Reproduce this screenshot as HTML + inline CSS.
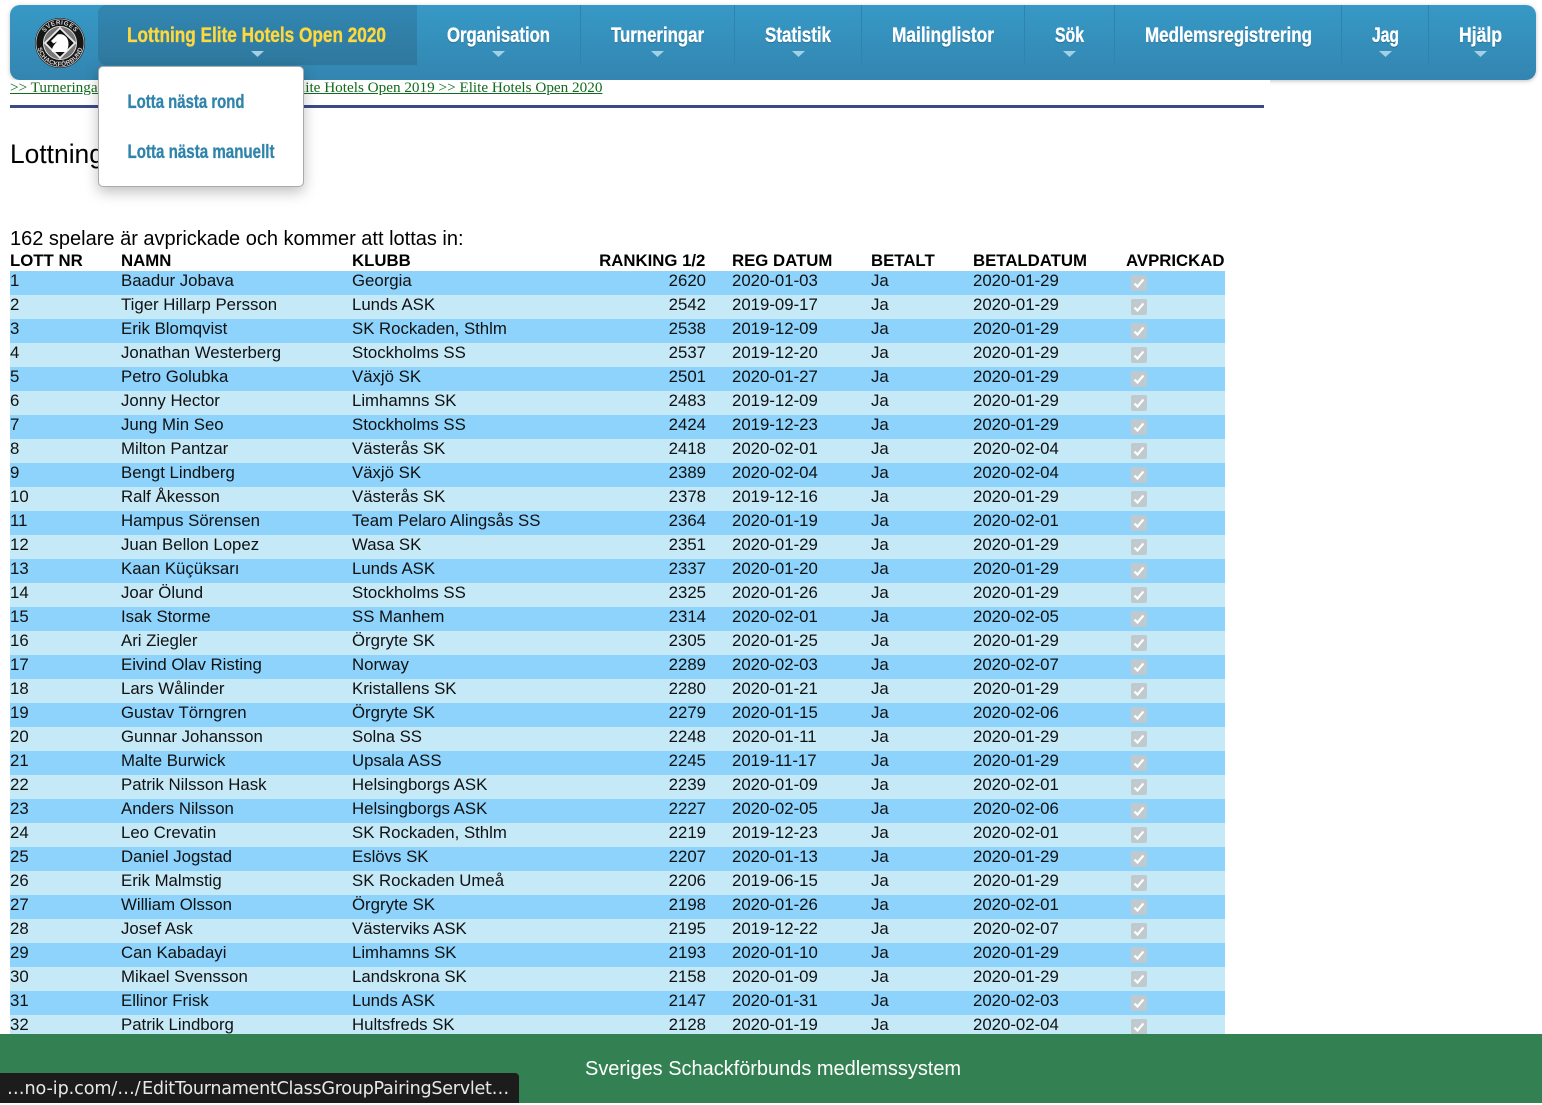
<!DOCTYPE html>
<html lang="sv"><head><meta charset="utf-8"><title>Lottning</title>
<style>
html,body{margin:0;padding:0;background:#fff;width:1542px;height:1103px;overflow:hidden;font-family:"Liberation Sans",sans-serif;color:#000}
.a{position:absolute}
#nav{left:10px;top:5px;width:1526px;height:75px;border-radius:10px;background:linear-gradient(#3799c6,#3385b0);box-shadow:0 1px 4px rgba(0,0,0,.25)}
#sheet{left:0;top:80px;width:1270px;height:30px;background:#fff}
#act{left:98px;top:5px;width:319px;height:60px;border-radius:8px 0 0 8px;background:linear-gradient(#3187b2,#2f789e)}
.sep{top:5px;width:1px;height:60px;background:#2f84ae}
#svg{left:0;top:0}
.crumb{top:79px;font:15.2px/17px "Liberation Serif",serif;color:#116b1c;text-decoration:underline;white-space:nowrap}
#hr{left:10px;top:105px;width:1254px;height:3px;background:#3b4a85}
#h{left:10px;top:139px;font-size:26.4px;line-height:31px}
#drop{left:98px;top:66px;width:204px;height:119px;background:#fff;border:1px solid #aaa;border-radius:5px;box-shadow:0 5px 14px rgba(0,0,0,.25)}
#intro{left:10px;top:228px;font-size:20px;line-height:22px;white-space:nowrap}
table{position:absolute;left:10px;top:251px;width:1215px;border-collapse:collapse;table-layout:fixed;font-size:16.8px;color:#111}
th{font-weight:bold;text-align:left;padding:0;height:20px;line-height:19px;color:#000;white-space:nowrap;vertical-align:top}
th.r{position:relative;left:-.6px}
td{padding:0;height:24px;line-height:19px;vertical-align:top;white-space:nowrap;overflow:hidden}
tr.o td{background:#8dd3fb}
tr.e td{background:#c6e9f7}
.r{text-align:right}
.cb{display:block;margin:4px 0 0 5px;width:16px;height:16px;background:#c0c9ce;border-radius:2px;position:relative}
.cb svg{position:absolute;left:0;top:0}
#foot{left:0;top:1034px;width:1542px;height:69px;background:#338153;color:#fff;font-size:20px;line-height:71px}
#foot span{position:absolute;left:585px;top:0;white-space:nowrap;letter-spacing:-.02px}
#status{left:0;top:1073px;width:519px;height:30px;background:#1c1c1c;border-radius:0 4px 0 0;color:#e8e8e8;font:17.6px/33px "DejaVu Sans",sans-serif;white-space:nowrap;overflow:hidden}
#status span{position:absolute;top:0}
</style></head><body>
<div class="a" id="intro">162 spelare är avprickade och kommer att lottas in:</div>
<table>
<colgroup><col style="width:111px"><col style="width:231px"><col style="width:230px"><col style="width:124px"><col style="width:26px"><col style="width:139px"><col style="width:102px"><col style="width:153px"><col style="width:99px"></colgroup>
<tr><th>LOTT NR</th><th>NAMN</th><th>KLUBB</th><th class="r">RANKING 1/2</th><th></th><th>REG DATUM</th><th>BETALT</th><th>BETALDATUM</th><th>AVPRICKAD</th></tr>
<tr class="o"><td>1</td><td>Baadur Jobava</td><td>Georgia</td><td class="r">2620</td><td></td><td>2020-01-03</td><td>Ja</td><td>2020-01-29</td><td><span class="cb"><svg width="16" height="16"><path d="M3.5 8.5l3 3 6-7" fill="none" stroke="#fff" stroke-width="2.2"/></svg></span></td></tr>
<tr class="e"><td>2</td><td>Tiger Hillarp Persson</td><td>Lunds ASK</td><td class="r">2542</td><td></td><td>2019-09-17</td><td>Ja</td><td>2020-01-29</td><td><span class="cb"><svg width="16" height="16"><path d="M3.5 8.5l3 3 6-7" fill="none" stroke="#fff" stroke-width="2.2"/></svg></span></td></tr>
<tr class="o"><td>3</td><td>Erik Blomqvist</td><td>SK Rockaden, Sthlm</td><td class="r">2538</td><td></td><td>2019-12-09</td><td>Ja</td><td>2020-01-29</td><td><span class="cb"><svg width="16" height="16"><path d="M3.5 8.5l3 3 6-7" fill="none" stroke="#fff" stroke-width="2.2"/></svg></span></td></tr>
<tr class="e"><td>4</td><td>Jonathan Westerberg</td><td>Stockholms SS</td><td class="r">2537</td><td></td><td>2019-12-20</td><td>Ja</td><td>2020-01-29</td><td><span class="cb"><svg width="16" height="16"><path d="M3.5 8.5l3 3 6-7" fill="none" stroke="#fff" stroke-width="2.2"/></svg></span></td></tr>
<tr class="o"><td>5</td><td>Petro Golubka</td><td>Växjö SK</td><td class="r">2501</td><td></td><td>2020-01-27</td><td>Ja</td><td>2020-01-29</td><td><span class="cb"><svg width="16" height="16"><path d="M3.5 8.5l3 3 6-7" fill="none" stroke="#fff" stroke-width="2.2"/></svg></span></td></tr>
<tr class="e"><td>6</td><td>Jonny Hector</td><td>Limhamns SK</td><td class="r">2483</td><td></td><td>2019-12-09</td><td>Ja</td><td>2020-01-29</td><td><span class="cb"><svg width="16" height="16"><path d="M3.5 8.5l3 3 6-7" fill="none" stroke="#fff" stroke-width="2.2"/></svg></span></td></tr>
<tr class="o"><td>7</td><td>Jung Min Seo</td><td>Stockholms SS</td><td class="r">2424</td><td></td><td>2019-12-23</td><td>Ja</td><td>2020-01-29</td><td><span class="cb"><svg width="16" height="16"><path d="M3.5 8.5l3 3 6-7" fill="none" stroke="#fff" stroke-width="2.2"/></svg></span></td></tr>
<tr class="e"><td>8</td><td>Milton Pantzar</td><td>Västerås SK</td><td class="r">2418</td><td></td><td>2020-02-01</td><td>Ja</td><td>2020-02-04</td><td><span class="cb"><svg width="16" height="16"><path d="M3.5 8.5l3 3 6-7" fill="none" stroke="#fff" stroke-width="2.2"/></svg></span></td></tr>
<tr class="o"><td>9</td><td>Bengt Lindberg</td><td>Växjö SK</td><td class="r">2389</td><td></td><td>2020-02-04</td><td>Ja</td><td>2020-02-04</td><td><span class="cb"><svg width="16" height="16"><path d="M3.5 8.5l3 3 6-7" fill="none" stroke="#fff" stroke-width="2.2"/></svg></span></td></tr>
<tr class="e"><td>10</td><td>Ralf Åkesson</td><td>Västerås SK</td><td class="r">2378</td><td></td><td>2019-12-16</td><td>Ja</td><td>2020-01-29</td><td><span class="cb"><svg width="16" height="16"><path d="M3.5 8.5l3 3 6-7" fill="none" stroke="#fff" stroke-width="2.2"/></svg></span></td></tr>
<tr class="o"><td>11</td><td>Hampus Sörensen</td><td>Team Pelaro Alingsås SS</td><td class="r">2364</td><td></td><td>2020-01-19</td><td>Ja</td><td>2020-02-01</td><td><span class="cb"><svg width="16" height="16"><path d="M3.5 8.5l3 3 6-7" fill="none" stroke="#fff" stroke-width="2.2"/></svg></span></td></tr>
<tr class="e"><td>12</td><td>Juan Bellon Lopez</td><td>Wasa SK</td><td class="r">2351</td><td></td><td>2020-01-29</td><td>Ja</td><td>2020-01-29</td><td><span class="cb"><svg width="16" height="16"><path d="M3.5 8.5l3 3 6-7" fill="none" stroke="#fff" stroke-width="2.2"/></svg></span></td></tr>
<tr class="o"><td>13</td><td>Kaan Küçüksarı</td><td>Lunds ASK</td><td class="r">2337</td><td></td><td>2020-01-20</td><td>Ja</td><td>2020-01-29</td><td><span class="cb"><svg width="16" height="16"><path d="M3.5 8.5l3 3 6-7" fill="none" stroke="#fff" stroke-width="2.2"/></svg></span></td></tr>
<tr class="e"><td>14</td><td>Joar Ölund</td><td>Stockholms SS</td><td class="r">2325</td><td></td><td>2020-01-26</td><td>Ja</td><td>2020-01-29</td><td><span class="cb"><svg width="16" height="16"><path d="M3.5 8.5l3 3 6-7" fill="none" stroke="#fff" stroke-width="2.2"/></svg></span></td></tr>
<tr class="o"><td>15</td><td>Isak Storme</td><td>SS Manhem</td><td class="r">2314</td><td></td><td>2020-02-01</td><td>Ja</td><td>2020-02-05</td><td><span class="cb"><svg width="16" height="16"><path d="M3.5 8.5l3 3 6-7" fill="none" stroke="#fff" stroke-width="2.2"/></svg></span></td></tr>
<tr class="e"><td>16</td><td>Ari Ziegler</td><td>Örgryte SK</td><td class="r">2305</td><td></td><td>2020-01-25</td><td>Ja</td><td>2020-01-29</td><td><span class="cb"><svg width="16" height="16"><path d="M3.5 8.5l3 3 6-7" fill="none" stroke="#fff" stroke-width="2.2"/></svg></span></td></tr>
<tr class="o"><td>17</td><td>Eivind Olav Risting</td><td>Norway</td><td class="r">2289</td><td></td><td>2020-02-03</td><td>Ja</td><td>2020-02-07</td><td><span class="cb"><svg width="16" height="16"><path d="M3.5 8.5l3 3 6-7" fill="none" stroke="#fff" stroke-width="2.2"/></svg></span></td></tr>
<tr class="e"><td>18</td><td>Lars Wålinder</td><td>Kristallens SK</td><td class="r">2280</td><td></td><td>2020-01-21</td><td>Ja</td><td>2020-01-29</td><td><span class="cb"><svg width="16" height="16"><path d="M3.5 8.5l3 3 6-7" fill="none" stroke="#fff" stroke-width="2.2"/></svg></span></td></tr>
<tr class="o"><td>19</td><td>Gustav Törngren</td><td>Örgryte SK</td><td class="r">2279</td><td></td><td>2020-01-15</td><td>Ja</td><td>2020-02-06</td><td><span class="cb"><svg width="16" height="16"><path d="M3.5 8.5l3 3 6-7" fill="none" stroke="#fff" stroke-width="2.2"/></svg></span></td></tr>
<tr class="e"><td>20</td><td>Gunnar Johansson</td><td>Solna SS</td><td class="r">2248</td><td></td><td>2020-01-11</td><td>Ja</td><td>2020-01-29</td><td><span class="cb"><svg width="16" height="16"><path d="M3.5 8.5l3 3 6-7" fill="none" stroke="#fff" stroke-width="2.2"/></svg></span></td></tr>
<tr class="o"><td>21</td><td>Malte Burwick</td><td>Upsala ASS</td><td class="r">2245</td><td></td><td>2019-11-17</td><td>Ja</td><td>2020-01-29</td><td><span class="cb"><svg width="16" height="16"><path d="M3.5 8.5l3 3 6-7" fill="none" stroke="#fff" stroke-width="2.2"/></svg></span></td></tr>
<tr class="e"><td>22</td><td>Patrik Nilsson Hask</td><td>Helsingborgs ASK</td><td class="r">2239</td><td></td><td>2020-01-09</td><td>Ja</td><td>2020-02-01</td><td><span class="cb"><svg width="16" height="16"><path d="M3.5 8.5l3 3 6-7" fill="none" stroke="#fff" stroke-width="2.2"/></svg></span></td></tr>
<tr class="o"><td>23</td><td>Anders Nilsson</td><td>Helsingborgs ASK</td><td class="r">2227</td><td></td><td>2020-02-05</td><td>Ja</td><td>2020-02-06</td><td><span class="cb"><svg width="16" height="16"><path d="M3.5 8.5l3 3 6-7" fill="none" stroke="#fff" stroke-width="2.2"/></svg></span></td></tr>
<tr class="e"><td>24</td><td>Leo Crevatin</td><td>SK Rockaden, Sthlm</td><td class="r">2219</td><td></td><td>2019-12-23</td><td>Ja</td><td>2020-02-01</td><td><span class="cb"><svg width="16" height="16"><path d="M3.5 8.5l3 3 6-7" fill="none" stroke="#fff" stroke-width="2.2"/></svg></span></td></tr>
<tr class="o"><td>25</td><td>Daniel Jogstad</td><td>Eslövs SK</td><td class="r">2207</td><td></td><td>2020-01-13</td><td>Ja</td><td>2020-01-29</td><td><span class="cb"><svg width="16" height="16"><path d="M3.5 8.5l3 3 6-7" fill="none" stroke="#fff" stroke-width="2.2"/></svg></span></td></tr>
<tr class="e"><td>26</td><td>Erik Malmstig</td><td>SK Rockaden Umeå</td><td class="r">2206</td><td></td><td>2019-06-15</td><td>Ja</td><td>2020-01-29</td><td><span class="cb"><svg width="16" height="16"><path d="M3.5 8.5l3 3 6-7" fill="none" stroke="#fff" stroke-width="2.2"/></svg></span></td></tr>
<tr class="o"><td>27</td><td>William Olsson</td><td>Örgryte SK</td><td class="r">2198</td><td></td><td>2020-01-26</td><td>Ja</td><td>2020-02-01</td><td><span class="cb"><svg width="16" height="16"><path d="M3.5 8.5l3 3 6-7" fill="none" stroke="#fff" stroke-width="2.2"/></svg></span></td></tr>
<tr class="e"><td>28</td><td>Josef Ask</td><td>Västerviks ASK</td><td class="r">2195</td><td></td><td>2019-12-22</td><td>Ja</td><td>2020-02-07</td><td><span class="cb"><svg width="16" height="16"><path d="M3.5 8.5l3 3 6-7" fill="none" stroke="#fff" stroke-width="2.2"/></svg></span></td></tr>
<tr class="o"><td>29</td><td>Can Kabadayi</td><td>Limhamns SK</td><td class="r">2193</td><td></td><td>2020-01-10</td><td>Ja</td><td>2020-01-29</td><td><span class="cb"><svg width="16" height="16"><path d="M3.5 8.5l3 3 6-7" fill="none" stroke="#fff" stroke-width="2.2"/></svg></span></td></tr>
<tr class="e"><td>30</td><td>Mikael Svensson</td><td>Landskrona SK</td><td class="r">2158</td><td></td><td>2020-01-09</td><td>Ja</td><td>2020-01-29</td><td><span class="cb"><svg width="16" height="16"><path d="M3.5 8.5l3 3 6-7" fill="none" stroke="#fff" stroke-width="2.2"/></svg></span></td></tr>
<tr class="o"><td>31</td><td>Ellinor Frisk</td><td>Lunds ASK</td><td class="r">2147</td><td></td><td>2020-01-31</td><td>Ja</td><td>2020-02-03</td><td><span class="cb"><svg width="16" height="16"><path d="M3.5 8.5l3 3 6-7" fill="none" stroke="#fff" stroke-width="2.2"/></svg></span></td></tr>
<tr class="e"><td>32</td><td>Patrik Lindborg</td><td>Hultsfreds SK</td><td class="r">2128</td><td></td><td>2020-01-19</td><td>Ja</td><td>2020-02-04</td><td><span class="cb"><svg width="16" height="16"><path d="M3.5 8.5l3 3 6-7" fill="none" stroke="#fff" stroke-width="2.2"/></svg></span></td></tr>
</table>
<div class="a" id="foot"><span>Sveriges Schackförbunds medlemssystem</span></div>
<div class="a" id="status"><span style="left:7px;letter-spacing:-.1px">…no-ip.com/…/</span><span style="left:142px;letter-spacing:-.29px">EditTournamentClassGroupPairingServlet…</span></div>
<div class="a" id="nav"></div>
<div class="a" id="sheet"></div>
<div class="a crumb" style="left:10px">&gt;&gt; Turneringar</div>
<div class="a crumb" style="left:301px">lite Hotels Open 2019 &gt;&gt; Elite Hotels Open 2020</div>
<div class="a" id="hr"></div>
<div class="a" id="h">Lottning</div>
<div class="a" id="act"></div>
<div class="a sep" style="left:580px"></div><div class="a sep" style="left:734px"></div><div class="a sep" style="left:861px"></div><div class="a sep" style="left:1024px"></div><div class="a sep" style="left:1114px"></div><div class="a sep" style="left:1341px"></div><div class="a sep" style="left:1428px"></div>
<div class="a" id="drop"></div>
<svg class="a" id="svg" width="1542" height="200" viewBox="0 0 1542 200" font-family="Liberation Sans, sans-serif" font-weight="bold" font-size="21">
<defs><path id="ringtop" d="M41.5 43a18.5 18.5 0 0 1 37 0"/><path id="ringbot" d="M37 43a23 23 0 0 0 46 0"/></defs>
<g>
<circle cx="60" cy="43" r="25" fill="#161616"/>
<circle cx="60" cy="43" r="24" fill="none" stroke="#c8c8c8" stroke-width=".8"/>
<text font-size="6.2" fill="#d8d8d8" letter-spacing=".5" text-anchor="middle"><textPath href="#ringtop" startOffset="50%">SVERIGES</textPath></text>
<text font-size="6.2" fill="#d8d8d8" letter-spacing=".3" text-anchor="middle"><textPath href="#ringbot" startOffset="50%">SCHACKFÖRBUND</textPath></text>
<circle cx="60" cy="43" r="16.5" fill="#777" stroke="#ddd" stroke-width="1"/>
<path d="M60 28L75 43 60 58 45 43Z" fill="#111" stroke="#eee" stroke-width="1.8"/>
<path d="M52 52c-.5-5 2.500-7.500 5-10.500l-3.500 2-2.500-2.500 6.500-6.500c5.500-1.500 11 2.500 11 9 0 3.500-1 6.500-2.500 8.500Z" fill="#fff"/>
</g>
<g fill="#ffd83d" stroke="#ffd83d" stroke-width=".35">
<text x="127" y="42" textLength="259" lengthAdjust="spacingAndGlyphs">Lottning Elite Hotels Open 2020</text>
</g>
<g fill="#fff" stroke="#fff" stroke-width=".35" style="filter:drop-shadow(0 1px 0 rgba(20,70,100,.45))">
<text x="447" y="42" textLength="103" lengthAdjust="spacingAndGlyphs">Organisation</text>
<text x="611" y="42" textLength="93" lengthAdjust="spacingAndGlyphs">Turneringar</text>
<text x="765" y="42" textLength="66" lengthAdjust="spacingAndGlyphs">Statistik</text>
<text x="892" y="42" textLength="102" lengthAdjust="spacingAndGlyphs">Mailinglistor</text>
<text x="1055" y="42" textLength="29" lengthAdjust="spacingAndGlyphs">Sök</text>
<text x="1145" y="42" textLength="167" lengthAdjust="spacingAndGlyphs">Medlemsregistrering</text>
<text x="1372" y="42" textLength="27" lengthAdjust="spacingAndGlyphs">Jag</text>
<text x="1459" y="42" textLength="43" lengthAdjust="spacingAndGlyphs">Hjälp</text>
</g>
<g fill="#a3d0e4">
<path d="M251 51h13l-6.500 6Z"/><path d="M492 51h13l-6.500 6Z"/><path d="M651 51h13l-6.500 6Z"/><path d="M792 51h13l-6.500 6Z"/><path d="M1063 51h13l-6.500 6Z"/><path d="M1379 51h13l-6.500 6Z"/><path d="M1474 51h13l-6.500 6Z"/>
</g>
<g fill="#2f84ab" stroke="#2f84ab" stroke-width=".3" font-size="19">
<text x="127.500" y="108" textLength="117" lengthAdjust="spacingAndGlyphs">Lotta nästa rond</text>
<text x="127.500" y="158" textLength="147" lengthAdjust="spacingAndGlyphs">Lotta nästa manuellt</text>
</g>
</svg>
</body></html>
